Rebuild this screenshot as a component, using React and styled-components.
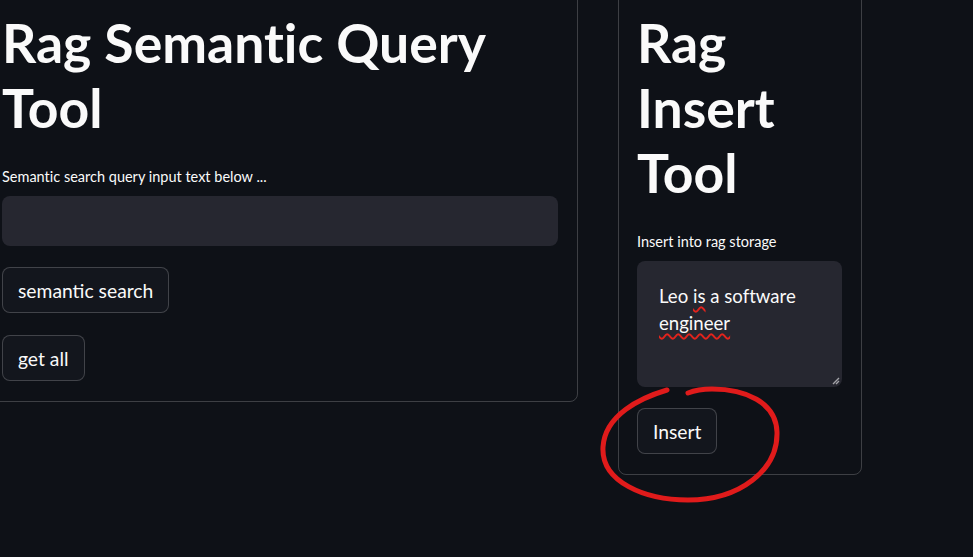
import styled, { createGlobalStyle } from "styled-components";

const GlobalStyle = createGlobalStyle`
  html {
    overflow: hidden;
  }
  body {
    margin: 0;
    background: #0e1117;
    font-family: Lato, "Noto Sans", sans-serif;
    font-variant-ligatures: none;
    color: #fafafa;
  }
`;

const Page = styled.div`
  position: relative;
  display: flex;
  align-items: flex-start;
  gap: 40px;
  margin-top: -10px;
  margin-left: -19px;
  width: 900px;
  min-height: 568px;
`;

const Panel = styled.section`
  box-sizing: border-box;
  width: ${({ $width }) => $width}px;
  border: 1px solid rgba(250, 250, 250, 0.2);
  border-radius: 8px;
  padding: 19px 19px ${({ $padBottom }) => $padBottom}px
    ${({ $padLeft }) => $padLeft}px;
  display: flex;
  flex-direction: column;
  align-items: flex-start;
`;

const Title = styled.h1`
  margin: 0 0 26px;
  font-size: 53.5px;
  line-height: 65px;
  font-weight: 700;
  color: #fafafa;
`;

const Label = styled.label`
  display: block;
  font-size: 14.5px;
  line-height: 21px;
  margin-bottom: 9px;
  color: #fafafa;
`;

const TextInput = styled.input`
  box-sizing: border-box;
  width: 100%;
  height: 50px;
  border: none;
  border-radius: 8px;
  background: #262730;
  color: #fafafa;
  padding: 0 14px;
  font: inherit;
  font-size: 18px;
  outline: none;
  margin-bottom: 21px;
`;

const TextArea = styled.div`
  position: relative;
  box-sizing: border-box;
  width: 100%;
  height: 126px;
  border-radius: 8px;
  background: #262730;
  padding: 22px 22px;
  font-size: 18.6px;
  line-height: 27px;
  color: #fafafa;
  margin-bottom: 21px;
`;

const Misspelled = styled.span`
  text-decoration: underline wavy #e3231c;
  text-decoration-thickness: 1.5px;
  text-underline-offset: 3px;
`;

const Grip = styled.svg`
  position: absolute;
  right: 2px;
  bottom: 2px;
`;

const Button = styled.button`
  box-sizing: border-box;
  height: 46px;
  padding: 0 15px;
  border: 1px solid rgba(250, 250, 250, 0.2);
  border-radius: 8px;
  background: #13161d;
  color: #fafafa;
  font-family: inherit;
  font-size: 19.3px;
  cursor: pointer;
  & + & {
    margin-top: 22px;
  }
`;

const Annotation = styled.svg`
  position: absolute;
  left: 19px;
  top: 10px;
  pointer-events: none;
`;

export default function App() {
  return (
    <>
      <GlobalStyle />
      <Page>
        <Panel $width={597} $padLeft={20} $padBottom={20}>
          <Title>Rag Semantic Query Tool</Title>
          <Label>Semantic search query input text below ...</Label>
          <TextInput />
          <Button>semantic search</Button>
          <Button>get all</Button>
        </Panel>
        <Panel $width={244} $padLeft={18} $padBottom={20}>
          <Title>Rag Insert Tool</Title>
          <Label>Insert into rag storage</Label>
          <TextArea>
            Leo <Misspelled>is</Misspelled> a software <Misspelled>engineer</Misspelled>
            <Grip width="10" height="10" viewBox="0 0 10 10">
              <path d="M9 3 L3 9 M9 6 L6 9" stroke="#a3a3a8" strokeWidth="1.4" />
            </Grip>
          </TextArea>
          <Button>Insert</Button>
        </Panel>
        <Annotation width="973" height="557" viewBox="0 0 973 557">
          <path
            d="M667 390 C 640 398, 605 415, 603 447 C 601 482, 645 500, 688 500 C 740 500, 778 470, 777 432 C 776 402, 745 389, 712 389 Q 698 389 688 393"
            fill="none"
            stroke="#e01b1b"
            strokeWidth="5"
            strokeLinecap="round"
          />
        </Annotation>
      </Page>
    </>
  );
}
